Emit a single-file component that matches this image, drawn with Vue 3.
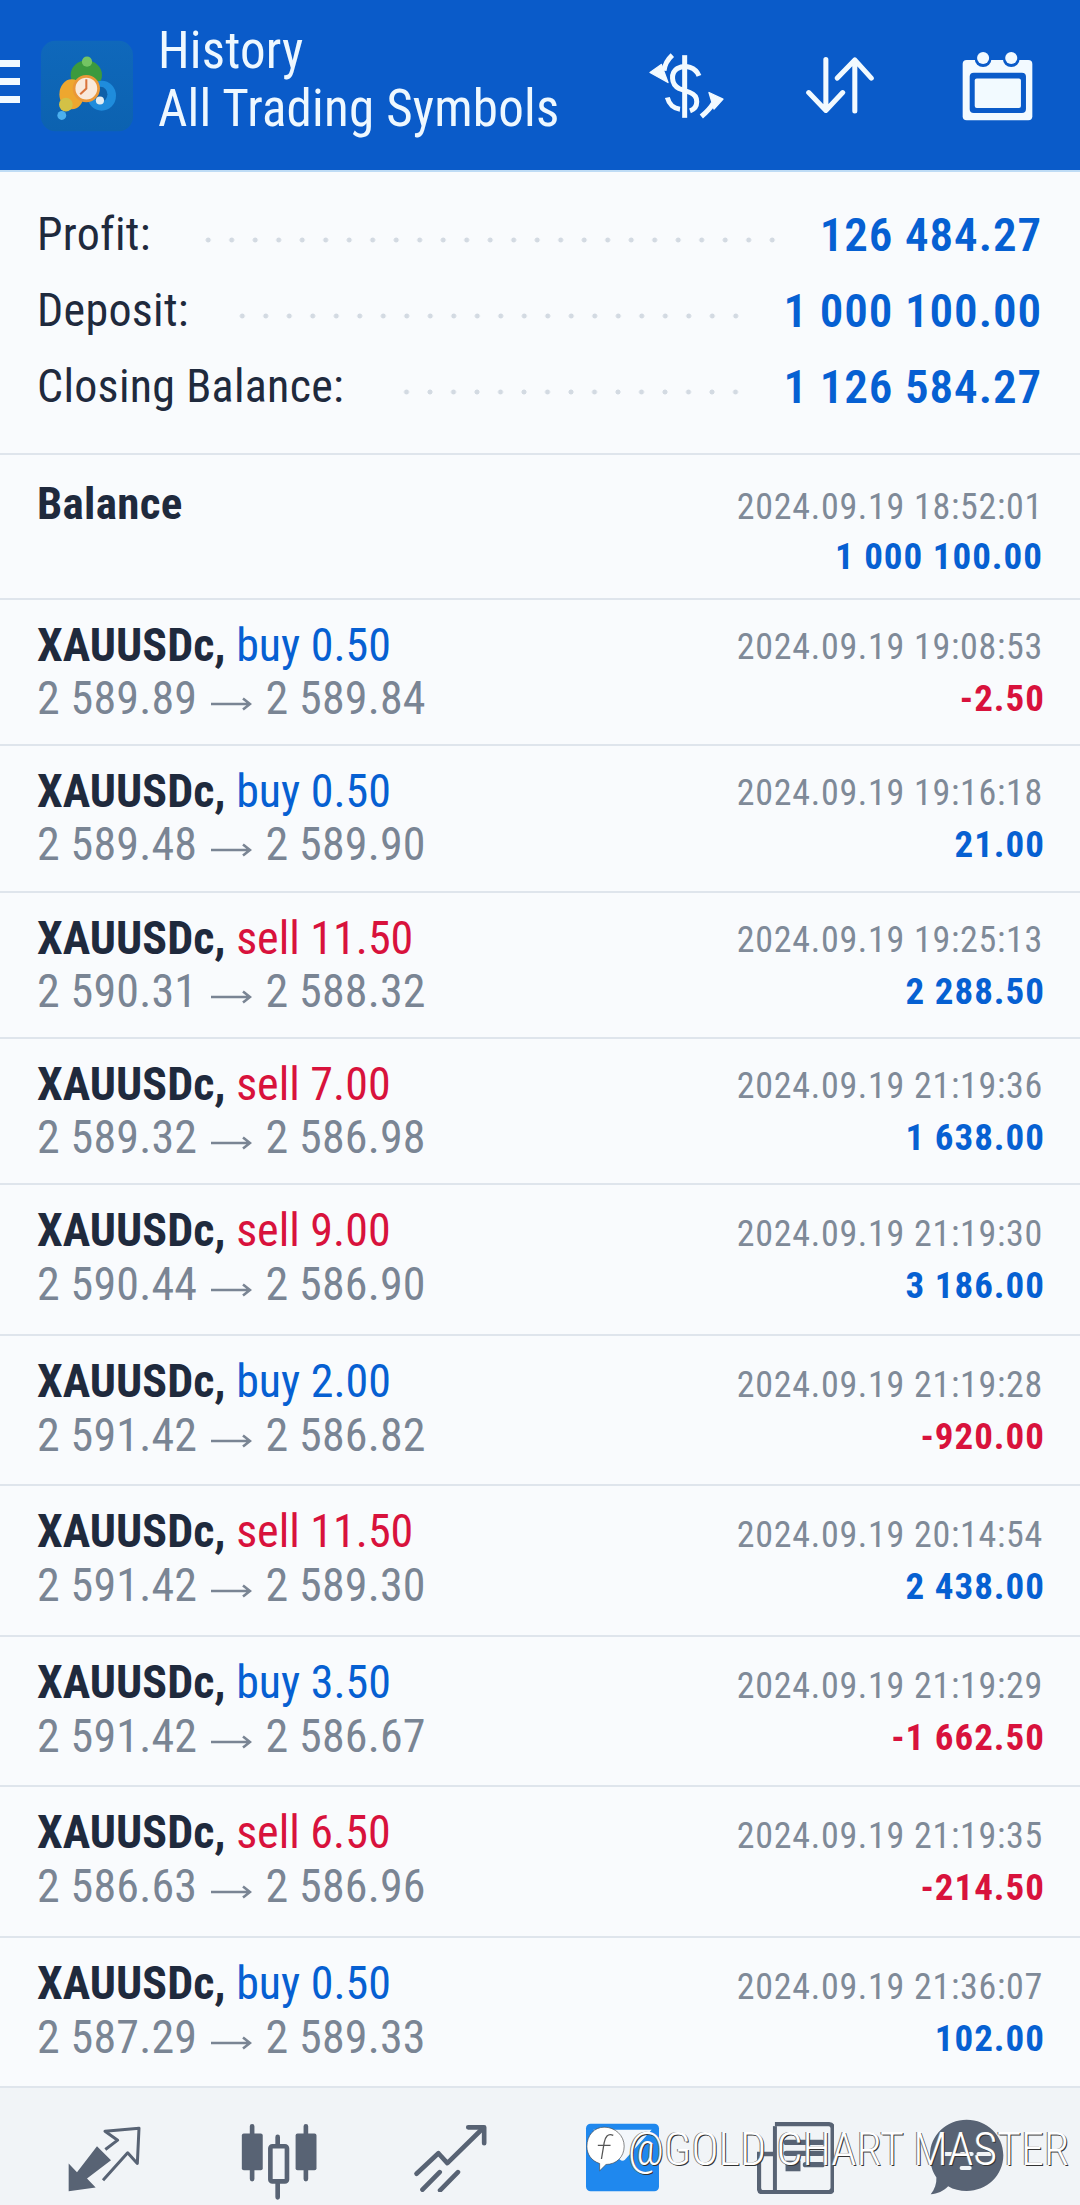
<script setup>
const summary = [
  { label: 'Profit:', value: '126 484.27', cls: 'a' },
  { label: 'Deposit:', value: '1 000 100.00', cls: 'b' },
  { label: 'Closing Balance:', value: '1 126 584.27', cls: 'c' },
]
const rows = [
  ['buy', '0.50', '2 589.89', '2 589.84', '2024.09.19 19:08:53', '-2.50'],
  ['buy', '0.50', '2 589.48', '2 589.90', '2024.09.19 19:16:18', '21.00'],
  ['sell', '11.50', '2 590.31', '2 588.32', '2024.09.19 19:25:13', '2 288.50'],
  ['sell', '7.00', '2 589.32', '2 586.98', '2024.09.19 21:19:36', '1 638.00'],
  ['sell', '9.00', '2 590.44', '2 586.90', '2024.09.19 21:19:30', '3 186.00'],
  ['buy', '2.00', '2 591.42', '2 586.82', '2024.09.19 21:19:28', '-920.00'],
  ['sell', '11.50', '2 591.42', '2 589.30', '2024.09.19 20:14:54', '2 438.00'],
  ['buy', '3.50', '2 591.42', '2 586.67', '2024.09.19 21:19:29', '-1 662.50'],
  ['sell', '6.50', '2 586.63', '2 586.96', '2024.09.19 21:19:35', '-214.50'],
  ['buy', '0.50', '2 587.29', '2 589.33', '2024.09.19 21:36:07', '102.00'],
].map(([side, vol, from, to, time, pl], i) => ({ side, vol, from, to, time, pl, tall: i >= 4, loss: pl.startsWith('-') }))
</script>

<template>
  <div class="page">
    <header class="top">
      <div class="burger"><i></i><i></i><i></i></div>
      <svg class="logo" viewBox="125 65 270 265">
        <defs>
          <linearGradient id="lg" x1="0" y1="0" x2="0" y2="1">
            <stop offset="0" stop-color="#0f68bb" />
            <stop offset="1" stop-color="#0c62b0" />
          </linearGradient>
        </defs>
        <rect x="125" y="65" width="270" height="265" rx="42" fill="url(#lg)" />
        <circle cx="186" cy="284" r="13" fill="#4cb0ee" />
        <ellipse cx="258" cy="165" rx="46" ry="42" fill="#3c9a3e" />
        <circle cx="260" cy="126" r="15" fill="#74c463" />
        <ellipse cx="215" cy="222" rx="36" ry="44" fill="#eea72f" />
        <circle cx="198" cy="252" r="20" fill="#d3c146" />
        <ellipse cx="303" cy="226" rx="42" ry="44" fill="#1f8cdc" />
        <ellipse cx="300" cy="222" rx="20" ry="22" fill="#0e5fa8" />
        <circle cx="258" cy="205" r="36" fill="#f9e9da" stroke="#ea9838" stroke-width="8" />
        <path d="M258 178V205L240 222" fill="none" stroke="#d9733a" stroke-width="6" />
        <circle cx="298" cy="240" r="12" fill="#e3edf2" />
      </svg>
      <div class="titles">
        <div>History</div>
        <div>All Trading Symbols</div>
      </div>
      <div class="actions">
        <svg class="ic-dollar" viewBox="55 60 225 215" fill="none" stroke="#f2faff" stroke-width="15">
          <path d="M162 78V266" />
          <path d="M205 140C195 115 165 105 140 118C120 130 120 165 145 178L178 190C205 200 205 235 178 245" />
          <path d="M125 78C112 90 102 105 100 125" />
          <path d="M110 205C115 225 130 238 148 240" />
          <path d="M212 262C226 250 240 236 248 222" />
          <path d="M58 130L92 106L112 160Z" fill="#f2faff" stroke-width="4" stroke-linejoin="round" />
          <path d="M277 210L235 190L250 240Z" fill="#f2faff" stroke-width="4" stroke-linejoin="round" />
        </svg>
        <svg class="ic-sort" viewBox="528 90 202 168" fill="none" stroke="#f2faff" stroke-width="15" stroke-linecap="round" stroke-linejoin="round">
          <path d="M587 97V245M536 195L587 248L637 195" />
          <path d="M673 250V100M621 152L673 98L722 152" />
        </svg>
        <svg class="ic-cal" viewBox="993 62 212 212">
          <rect x="995" y="92" width="208" height="180" rx="12" fill="#f2faff" />
          <rect x="1016" y="130" width="168" height="120" rx="12" fill="#0a5bc9" />
          <rect x="1031" y="147" width="138" height="88" rx="6" fill="#f2faff" />
          <circle cx="1056" cy="88" r="25" fill="#0a5bc9" />
          <circle cx="1140" cy="88" r="25" fill="#0a5bc9" />
          <circle cx="1056" cy="86" r="18" fill="#f2faff" />
          <circle cx="1140" cy="86" r="18" fill="#f2faff" />
        </svg>
      </div>
    </header>

    <section class="summary">
      <div v-for="s in summary" :key="s.label" class="sum-row" :class="s.cls">
        <span class="sum-label">{{ s.label }}</span>
        <span class="dots"></span>
        <span class="sum-value">{{ s.value }}</span>
      </div>
    </section>

    <section class="balance">
      <div class="b-title">Balance</div>
      <div class="right">
        <div class="time">2024.09.19 18:52:01</div>
        <div class="money">1 000 100.00</div>
      </div>
    </section>

    <article v-for="(r, i) in rows" :key="i" class="row" :class="{ tall: r.tall }">
      <div class="left">
        <div class="deal"><b>XAUUSDc,</b> <span :class="r.side">{{ r.side }} {{ r.vol }}</span></div>
        <div class="prices">{{ r.from }} <svg class="arrow" viewBox="0 0 41 14" fill="none" stroke="#7a8594" stroke-width="2.6"><path d="M0 7H39M32 1.5L39 7L32 12.5" /></svg> {{ r.to }}</div>
      </div>
      <div class="right">
        <div class="time">{{ r.time }}</div>
        <div class="money" :class="{ loss: r.loss }">{{ r.pl }}</div>
      </div>
    </article>

    <nav class="nav">
      <div class="cell">
        <svg class="n1" viewBox="80 48 222 200">
          <path d="M85 160V243L166 232L140 205L212 150L170 108L110 186Z" fill="#586374" />
          <path d="M195 118L232 90L194 63L296 54L291 160L262 128L188 210" fill="none" stroke="#586374" stroke-width="9" stroke-linejoin="round" />
        </svg>
      </div>
      <div class="cell">
        <svg class="n2" viewBox="600 36 234 232" fill="none" stroke="#586374" stroke-width="14" stroke-linecap="round">
          <path d="M636 46V205M798 46V205M713 78V100M713 218V260" />
          <rect x="605" y="68" width="63" height="110" rx="6" fill="#586374" stroke="none" />
          <rect x="767" y="68" width="63" height="110" rx="6" fill="#586374" stroke="none" />
          <rect x="691" y="106" width="50" height="106" rx="6" />
        </svg>
      </div>
      <div class="cell">
        <svg class="n3" viewBox="1112 40 222 205" fill="none" stroke="#586374" stroke-width="14" stroke-linecap="round" stroke-linejoin="round">
          <path d="M1122 190L1188 128L1215 158L1320 55" />
          <path d="M1278 50H1326V98" />
          <path d="M1140 238L1192 185M1193 240L1247 185" />
        </svg>
      </div>
      <div class="cell">
        <svg class="n4" viewBox="76 40 224 208">
          <rect x="78" y="42" width="220" height="204" rx="14" fill="#1f88ee" />
          <path d="M100 60H276L196 150Q188 158 180 150Z" fill="#f3f7fb" />
        </svg>
      </div>
      <div class="cell">
        <svg class="n5" viewBox="594 34 232 216" fill="none" stroke="#586374">
          <path d="M648 40H810Q822 40 822 52V232Q822 245 810 245H610Q600 245 600 232V130H648" stroke-width="13" />
          <path d="M648 46V240" stroke-width="12" />
          <path d="M682 95H790M682 128H790M740 162H790" stroke-width="16" stroke-linecap="round" />
          <rect x="680" y="150" width="45" height="32" fill="#586374" stroke="none" />
        </svg>
      </div>
      <div class="cell">
        <svg class="n6" viewBox="1106 26 220 226">
          <path d="M1215 28C1275 28 1324 74 1324 134C1324 194 1275 240 1215 240C1195 240 1176 236 1160 226C1146 240 1128 249 1108 250C1120 235 1126 218 1125 200C1112 182 1106 158 1106 134C1106 74 1155 28 1215 28Z" fill="#586374" />
          <path d="M1150 130H1180M1200 130H1230M1250 130H1285M1200 172H1224" stroke="#f1f4f7" stroke-width="12" stroke-linecap="round" />
        </svg>
      </div>
      <div class="mark">
        <svg class="mark-logo" viewBox="0 0 44 50">
          <path d="M20 1C32 1 42 10 42 22C42 34 33 42 22 42L15 49L15 41C6 38 1 31 1 22C1 10 9 1 20 1Z" fill="#fff" stroke="#444" stroke-width=".7" />
          <path d="M30 10C24 7 21 12 20 18L17 36M13 21H27" fill="none" stroke="#555" stroke-width="1.4" />
        </svg>
        <span>@GOLD CHART MASTER</span>
      </div>
    </nav>
  </div>
</template>

<style>
html, body { margin: 0; background: #f9fbfd; }
</style>

<style scoped>
.page {
  width: 1080px;
  height: 2205px;
  overflow: hidden;
  background: #f9fbfd;
  font-family: Roboto, "Liberation Sans", sans-serif;
  font-stretch: 85%;
  color: #1f2a3d;
}
.top {
  height: 172px;
  box-sizing: border-box;
  background: #0a5bc9;
  display: flex;
  align-items: center;
  color: #eef8ff;
  border-bottom: 2px solid #bfdcf5;
}
.burger { width: 20px; display: flex; flex-direction: column; gap: 11px; margin-top: -8px; }
.burger i { display: block; height: 7px; background: #f2faff; }
.logo { width: 92px; height: 92px; margin-left: 21px; margin-top: 2px; flex: none; }
.titles { margin-left: 25px; font-size: 51px; line-height: 58px; margin-top: -11px; letter-spacing: .2px; }
.actions { margin-left: auto; display: flex; align-items: center; }
.ic-dollar { width: 75px; height: 72px; }
.ic-sort { width: 68px; height: 57px; margin-left: 82px; }
.ic-cal { width: 71px; height: 71px; margin-left: 88px; margin-right: 47px; }

.summary {
  height: 283px;
  box-sizing: border-box;
  padding: 24px 38px 0 37px;
  border-bottom: 2px solid #dfe5ec;
}
.sum-row { height: 76px; display: flex; align-items: center; font-size: 46px; letter-spacing: .3px; }
.sum-value { color: #0660d2; font-weight: 600; font-size: 47px; letter-spacing: .9px; }
.dots {
  flex: 1;
  height: 6px;
  margin: 12px 36px 0 46px;
  background: radial-gradient(circle at center, #d3dae2 2.2px, transparent 2.8px) right center / 23.5px 6px repeat-x;
}
.balance, .row {
  box-sizing: border-box;
  display: flex;
  justify-content: space-between;
  padding: 18px 37px 0 37px;
  border-bottom: 2px solid #dfe5ec;
}
.balance { height: 145px; }
.row { height: 146.3px; }
.row.tall { height: 150.5px; }
.b-title { font-size: 45px; font-weight: 700; line-height: 54px; margin-top: 4px; letter-spacing: .3px; }
.deal { font-size: 46px; line-height: 54px; }
.deal b { font-weight: 700; }
.prices { font-size: 46px; line-height: 53px; color: #7a8594; letter-spacing: .15px; }
.tall .prices { margin-top: 1px; }
.arrow { width: 41px; height: 14px; margin: 0 3px; vertical-align: 3px; }
.buy { color: #0660d2; }
.sell { color: #d8123c; }
.right { text-align: right; }
.time { font-size: 36px; line-height: 52px; color: #7f8a98; margin-top: 3px; letter-spacing: .7px; }
.row .time { line-height: 53px; }
.tall .time { margin-top: 5px; }
.money { font-size: 37px; line-height: 50px; font-weight: 700; color: #0660d2; letter-spacing: 1px; }
.row .money { margin-right: -2px; }
.money.loss { color: #d8123c; }
.balance .time { margin-top: 8px; }
.balance .money { margin-top: -1px; }

.nav {
  position: relative;
  height: 117px;
  box-sizing: border-box;
  background: #f1f4f7;
  padding: 0 25px 0 17px;
  display: grid;
  grid-template-columns: repeat(6, 1fr);
}
.cell { display: flex; align-items: center; justify-content: center; height: 139px; }
.n1 { width: 74px; height: 67px; margin-top: 4px; }
.n2 { width: 78px; height: 77px; margin-top: 7px; margin-left: 5px; }
.n3 { width: 74px; height: 68px; }
.n4 { width: 75px; height: 69px; }
.n5 { width: 77px; height: 72px; }
.n6 { width: 76px; height: 76px; margin-left: -3px; margin-top: -2px; }
.mark {
  position: absolute;
  left: 586px;
  top: 34px;
  display: flex;
  align-items: center;
  gap: 2px;
}
.mark-logo { width: 40px; height: 46px; }
.mark span {
  font-family: Roboto, sans-serif;
  font-weight: 300;
  font-size: 46px;
  color: #fff;
  text-shadow: 1px 1px 0 #333, -1px 0 0 #777;
  white-space: nowrap;
}
</style>
